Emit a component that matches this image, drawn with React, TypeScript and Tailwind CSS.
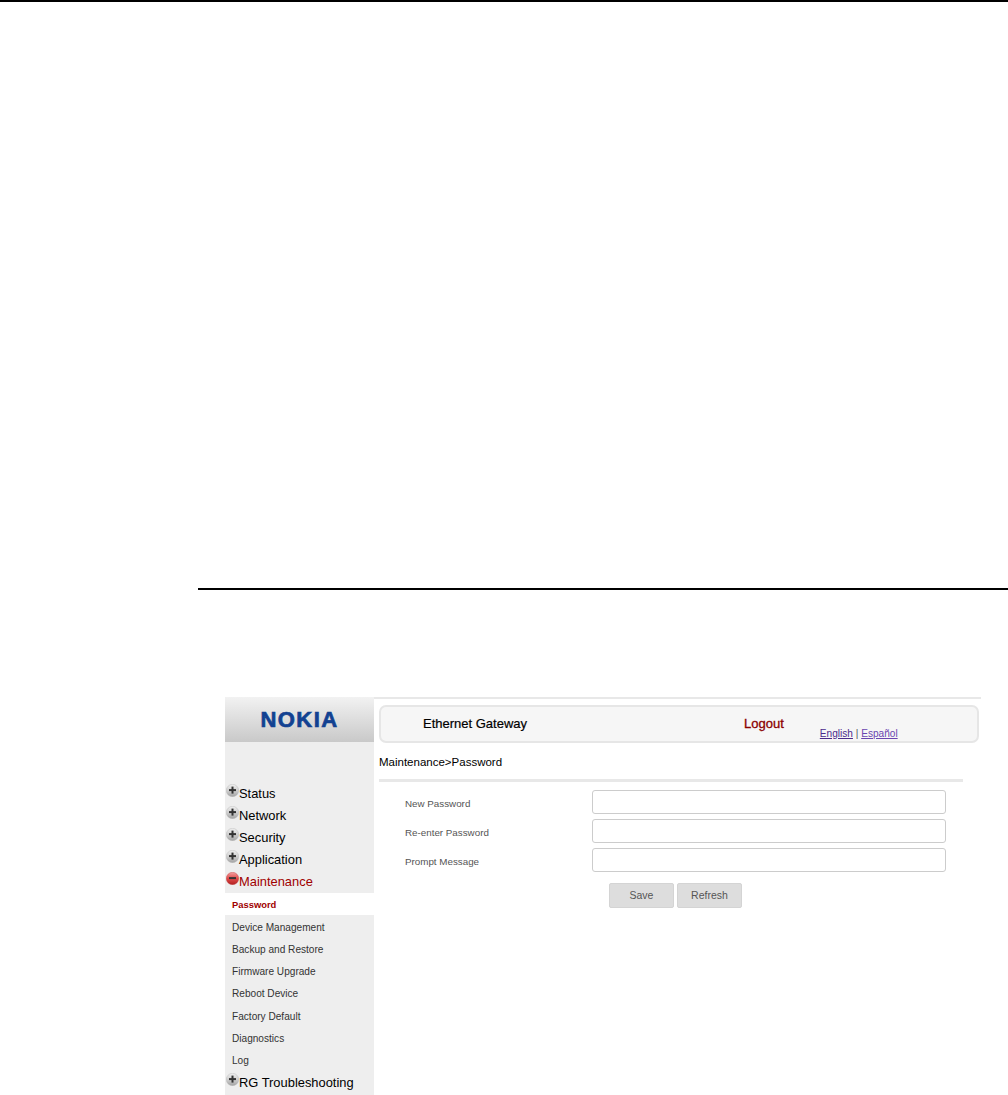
function TreeIcon(props: { open?: boolean }) {
  const id = props.open ? "sphere-red" : "sphere-gray";
  return (
    <svg width="13" height="13" viewBox="0 0 13 13" className="mt-[2px] shrink-0">
      <defs>
        <linearGradient id={id} x1="0" y1="0" x2="0" y2="1">
          <stop offset="0%" stopColor={props.open ? "#f2a0a0" : "#f0f0f0"} />
          <stop offset="50%" stopColor={props.open ? "#e04a4a" : "#cfcfcf"} />
          <stop offset="100%" stopColor={props.open ? "#b02020" : "#a2a2a2"} />
        </linearGradient>
      </defs>
      <circle cx="6.5" cy="6.5" r="6.2" fill={`url(#${id})`} stroke={props.open ? "#c23a3a" : "#b4b4b4"} strokeWidth="0.4" />
      <rect x="3" y="5.1" width="7" height="2" fill="#333" />
      {!props.open && <rect x="5.5" y="2.6" width="2" height="7" fill="#333" />}
    </svg>
  );
}

function MenuRow(props: { label: string; open?: boolean }) {
  return (
    <div className={`flex h-[22px] items-start pl-px ${props.open ? "text-[#a00000]" : "text-black"}`}>
      <TreeIcon open={props.open} />
      <span className="mt-px text-[12.9px] leading-[22px]">{props.label}</span>
    </div>
  );
}

const subItems = ["Device Management", "Backup and Restore", "Firmware Upgrade", "Reboot Device", "Factory Default", "Diagnostics", "Log"];

function Field(props: { label: string }) {
  return (
    <div className="flex h-[24px] items-center">
      <label className="mt-[5px] w-[213px] pl-[26px] text-[9.8px] text-[#555]">{props.label}</label>
      <input type="text" className="h-[24px] w-[354px] rounded-[3px] border border-[#ccc] bg-white" />
    </div>
  );
}

export default function App() {
  return (
    <div className="h-[1095px] w-[1008px] overflow-hidden bg-white font-['Liberation_Sans',Arial,sans-serif]">
      <div className="h-[2px] bg-black" />
      <div className="ml-[198px] mt-[586px] h-[2px] bg-black" />
      <div className="ml-[225px] mt-[107px] flex w-[756px]">
        <aside className="h-[398px] w-[149px] shrink-0 bg-[#eee]">
          <div className="flex h-[45px] items-center justify-center bg-gradient-to-b from-[#f2f2f2] to-[#c9c9c9]">
            <span className="text-[22px] font-bold leading-none tracking-[1.4px] text-[#124191] [-webkit-text-stroke:0.7px_#124191]">NOKIA</span>
          </div>
          <div className="pt-[40px]">
            <MenuRow label="Status" />
            <MenuRow label="Network" />
            <MenuRow label="Security" />
            <MenuRow label="Application" />
            <MenuRow label="Maintenance" open />
            <div className="mt-px flex h-[22px] items-center bg-white pl-[7px] pt-[2px] text-[9.4px] font-bold text-[#a00000]">Password</div>
            {subItems.map((item) => (
              <div key={item} className="flex h-[22.3px] items-center pl-[7px] pt-[2px] text-[10.1px] text-[#333]">
                {item}
              </div>
            ))}
            <MenuRow label="RG Troubleshooting" />
          </div>
        </aside>
        <main className="min-w-0 flex-1">
          <div className="h-[2px] bg-[#e8e8e8]" />
          <div className="ml-[5px] mr-[2px] mt-[6px] flex h-[38px] rounded-[7px] border-2 border-[#e6e6e6] bg-[#f6f6f6]">
            <span className="ml-[42px] mt-[9px] text-[13px] leading-[16px] text-black [-webkit-text-stroke:0.2px_#000]">Ethernet Gateway</span>
            <span className="ml-[217px] mt-[9px] text-[13px] leading-[16px] text-[#8b0000] [-webkit-text-stroke:0.3px_#8b0000]">Logout</span>
            <span className="ml-[36px] mt-[20px] text-[10.1px] leading-[13px] text-[#555]">
              <a href="#" className="text-[#4b2a8c] underline">English</a> | <a href="#" className="text-[#6a45b0] underline">Español</a>
            </span>
          </div>
          <div className="ml-[5px] mt-[11px] text-[11.5px] leading-[16px] text-black">Maintenance&gt;Password</div>
          <div className="ml-[5px] mr-[18px] mt-[9px] h-[3px] bg-[#e8e8e8]" />
          <div className="ml-[5px] mt-[8px] flex flex-col gap-[5px]">
            <Field label="New Password" />
            <Field label="Re-enter Password" />
            <Field label="Prompt Message" />
          </div>
          <div className="ml-[235px] mt-[11px] flex gap-[3px]">
            <button className="h-[25px] w-[65px] rounded-[2px] border border-[#d4d4d4] bg-[#ddd] text-[10.5px] text-[#555]">Save</button>
            <button className="h-[25px] w-[65px] rounded-[2px] border border-[#d4d4d4] bg-[#ddd] text-[10.5px] text-[#555]">Refresh</button>
          </div>
        </main>
      </div>
    </div>
  );
}
